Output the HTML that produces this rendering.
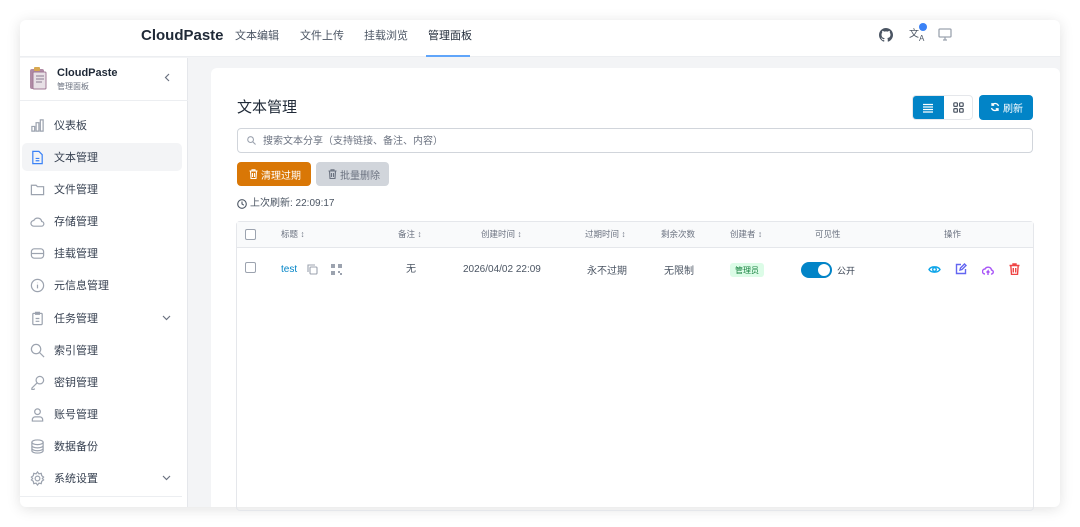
<!DOCTYPE html><html><head><meta charset="utf-8"><style>
*{box-sizing:border-box;margin:0;padding:0}
body{width:1080px;height:527px;background:#fff;font-family:"Liberation Sans","Noto Sans CJK SC",sans-serif;position:relative;overflow:hidden;color:#374151}
div{line-height:1.2}
.a{position:absolute}
.win{left:20px;top:20px;width:1040px;height:487px;background:#f3f4f6;border-radius:6px;box-shadow:0 2px 14px rgba(0,0,0,.12);overflow:hidden}
.hdr{left:0;top:0;width:1040px;height:37px;background:#fff;border-bottom:1px solid #eceef1}
.nav{font-size:11px;color:#4b5563;top:9px;line-height:14px}
.side{left:0;top:38px;width:168px;height:449px;background:#fff;border-right:1px solid #e5e7eb}
.it{left:10px;font-size:11px;color:#374151;height:16px;display:flex;align-items:center}
.it span{position:relative;top:2px}
.it svg{width:15px;height:15px;margin-right:9px;stroke:#9ca3af;fill:none;stroke-width:1.3}
.card{left:191px;top:48px;width:849px;height:460px;background:#fff;border-radius:6px}
.th{font-size:8.5px;color:#6b7280;line-height:10px}
.td{font-size:10px;color:#4b5563;top:266px;line-height:12px}
.chev{left:142px}
svg{display:block}
</style></head><body>
<div class="a win">
 <div class="a hdr">
  <div class="a" style="left:121px;top:7px;font-size:15px;font-weight:bold;color:#1f2937;line-height:18px">CloudPaste</div>
  <div class="a nav" style="left:215px">文本编辑</div>
  <div class="a nav" style="left:280px">文件上传</div>
  <div class="a nav" style="left:344px">挂载浏览</div>
  <div class="a nav" style="left:408px;color:#1f2937">管理面板</div>
  <div class="a" style="left:406px;top:35px;width:44px;height:2px;background:#60a5fa"></div>
  <svg class="a" style="left:859px;top:8px" width="14" height="14" viewBox="0 0 16 16"><path fill="#4b5563" d="M8 0C3.6 0 0 3.6 0 8c0 3.5 2.3 6.5 5.5 7.6.4.1.5-.2.5-.4v-1.4c-2.2.5-2.7-1-2.7-1-.4-.9-.9-1.2-.9-1.2-.7-.5.1-.5.1-.5.8.1 1.2.8 1.2.8.7 1.3 1.9.9 2.3.7.1-.5.3-.9.5-1.100-1.8-.2-3.6-.9-3.600-4 0-.9.3-1.6.8-2.100-.1-.2-.4-1 .1-2.100 0 0 .7-.2 2.2.8.6-.2 1.3-.3 2-.3s1.4.1 2 .3c1.5-1 2.2-.8 2.2-.8.4 1.1.2 1.9.1 2.1.5.6.8 1.3.8 2.1 0 3.1-1.9 3.7-3.6 3.9.3.3.5.8.5 1.5v2.2c0 .2.1.5.6.4C13.7 14.5 16 11.5 16 8c0-4.4-3.6-8-8-8z"/></svg>
  <div class="a" style="left:889px;top:9px;font-size:10px;color:#4b5563;line-height:12px">文<span style="font-size:8px;position:relative;top:4px">A</span></div>
  <div class="a" style="left:899px;top:3px;width:8px;height:8px;border-radius:4px;background:#3b82f6"></div>
  <svg class="a" style="left:918px;top:8px" width="14" height="13" viewBox="0 0 14 13" fill="none" stroke="#9ca3af" stroke-width="1.3"><rect x="1" y="1" width="12" height="8" rx="1"/><path d="M5 12h4M7 9v3"/></svg>
 </div>
 <div class="a side">
  <svg class="a" style="left:9px;top:9px" width="19" height="23" viewBox="0 0 19 23"><rect x="1" y="2" width="14" height="20" rx="2" fill="#b08aa5"/><rect x="4" y="5" width="13" height="17" rx="1" fill="#e8e0e6" stroke="#a07895"/><rect x="5" y="0" width="6" height="4" rx="1" fill="#d8a850"/><path d="M7 9h8M7 12h8M7 15h6" stroke="#8a7a90"/></svg>
  <div class="a" style="left:37px;top:9px;font-size:11px;font-weight:bold;color:#1f2937">CloudPaste</div>
  <div class="a" style="left:37px;top:24px;font-size:8px;color:#6b7280">管理面板</div>
  <svg class="a" style="left:144px;top:15px" width="6" height="9" viewBox="0 0 6 9" fill="none" stroke="#6b7280" stroke-width="1.2"><path d="M5 1L1.5 4.5 5 8"/></svg>
  <div class="a" style="left:0;top:42px;width:168px;height:1px;background:#eceef1"></div>
  <div class="a" style="left:2px;top:85px;width:160px;height:28px;background:#f3f4f6;border-radius:5px"></div>
  <div class="a it" style="top:59px"><svg viewBox="0 0 16 16"><path d="M2 14V9h3v5zM6.5 14V5h3v9zM11 14V2h3v12z"/></svg><span>仪表板</span></div>
  <div class="a it" style="top:91px"><svg viewBox="0 0 16 16" style="stroke:#3b82f6"><path d="M3 1.5h6.5L13 5v9.5H3z M6 9h4M6 11.5h4"/></svg><span>文本管理</span></div>
  <div class="a it" style="top:123px"><svg viewBox="0 0 16 16"><path d="M1.5 3.5h5l1.5 1.5h6.5v8.5h-13z"/></svg><span>文件管理</span></div>
  <div class="a it" style="top:155px"><svg viewBox="0 0 16 16"><path d="M4 13a3 3 0 010-6 4.5 4.5 0 018.5 1A2.5 2.5 0 0112 13z"/></svg><span>存储管理</span></div>
  <div class="a it" style="top:187px"><svg viewBox="0 0 16 16"><rect x="1.5" y="3" width="13" height="10" rx="3"/><path d="M1.5 8h13"/></svg><span>挂载管理</span></div>
  <div class="a it" style="top:219px"><svg viewBox="0 0 16 16"><circle cx="8" cy="8" r="6.5"/><path d="M8 7v4M8 5v.5"/></svg><span>元信息管理</span></div>
  <div class="a it" style="top:252px"><svg viewBox="0 0 16 16"><rect x="3" y="2.5" width="10" height="12" rx="1"/><path d="M6 1.5h4v2H6zM6 8h4M6 11h4"/></svg><span>任务管理</span></div>
  <svg class="a chev" style="top:257px" width="9" height="6" viewBox="0 0 9 6" fill="none" stroke="#6b7280" stroke-width="1.2"><path d="M1 1l3.5 3.5L8 1"/></svg>
  <div class="a it" style="top:284px"><svg viewBox="0 0 16 16"><circle cx="6.5" cy="6.5" r="5"/><path d="M10 10l5 5"/></svg><span>索引管理</span></div>
  <div class="a it" style="top:316px"><svg viewBox="0 0 16 16"><circle cx="10.5" cy="5.5" r="4"/><path d="M7.5 8.5L2 14v1.5h2l1-1"/></svg><span>密钥管理</span></div>
  <div class="a it" style="top:348px"><svg viewBox="0 0 16 16"><circle cx="8" cy="5" r="3"/><path d="M2.5 15v-1.5a3 3 0 013-3h5a3 3 0 013 3V15z"/></svg><span>账号管理</span></div>
  <div class="a it" style="top:380px"><svg viewBox="0 0 16 16"><ellipse cx="8" cy="3.5" rx="6" ry="2.5"/><path d="M2 3.5v9c0 1.4 2.7 2.5 6 2.5s6-1.1 6-2.5v-9M2 7c0 1.4 2.7 2.5 6 2.5S14 8.4 14 7M2 10c0 1.4 2.7 2.5 6 2.5s6-1.1 6-2.5"/></svg><span>数据备份</span></div>
  <div class="a it" style="top:412px"><svg viewBox="0 0 16 16"><circle cx="8" cy="8" r="2.5"/><path d="M8 1l1.5 2 2.5-.5.5 2.5 2 1.5-1.3 1.5 1.3 1.5-2 1.5-.5 2.5-2.5-.5L8 15l-1.5-2-2.5.5-.5-2.5-2-1.5L2.8 8 1.5 6.5l2-1.5.5-2.5 2.5.5z"/></svg><span>系统设置</span></div>
  <svg class="a chev" style="top:417px" width="9" height="6" viewBox="0 0 9 6" fill="none" stroke="#6b7280" stroke-width="1.2"><path d="M1 1l3.5 3.5L8 1"/></svg>
  <div class="a" style="left:0;top:438px;width:162px;height:1px;background:#eceef1"></div>
 </div>
 <div class="a card"></div>
</div>
<div class="a" style="left:237px;top:99px;font-size:15px;color:#1f2937">文本管理</div>
<div class="a" style="left:912px;top:95px;width:61px;height:25px;border:1px solid #e5e7eb;border-radius:4px;overflow:hidden">
 <div class="a" style="left:0;top:0;width:31px;height:25px;background:#0284c7"></div>
 <svg class="a" style="left:10px;top:7px" width="10" height="10" viewBox="0 0 10 10" stroke="#fff" stroke-width="1.3"><path d="M0 1.5h10M0 4h10M0 6.5h10M0 9h10"/></svg>
 <svg class="a" style="left:40px;top:6px" width="11" height="11" viewBox="0 0 11 11" fill="none" stroke="#4b5563" stroke-width="1.2"><rect x=".8" y=".8" width="3.6" height="3.6" rx="1"/><rect x="6.6" y=".8" width="3.6" height="3.6" rx="1"/><rect x=".8" y="6.6" width="3.6" height="3.6" rx="1"/><rect x="6.6" y="6.6" width="3.6" height="3.6" rx="1"/></svg>
</div>
<div class="a" style="left:979px;top:95px;width:54px;height:25px;background:#0284c7;border-radius:4px;color:#fff;font-size:10px;line-height:25px;padding:2px 0 0 24px">刷新</div>
<svg class="a" style="left:990px;top:102px" width="10" height="10" viewBox="0 0 10 10" fill="none" stroke="#fff" stroke-width="1.3"><path d="M8.5 4A3.7 3.7 0 002 3M1.5 6a3.7 3.7 0 006.5 1M2 1v2.2h2.2M8 9V6.8H5.8"/></svg>
<div class="a" style="left:237px;top:128px;width:796px;height:25px;border:1px solid #d1d5db;border-radius:4px"></div>
<svg class="a" style="left:247px;top:136px" width="9" height="9" viewBox="0 0 10 10" fill="none" stroke="#9ca3af" stroke-width="1.2"><circle cx="4" cy="4" r="3.2"/><path d="M6.5 6.5L9.5 9.5"/></svg>
<div class="a" style="left:263px;top:136px;font-size:10px;color:#6b7280">搜索文本分享（支持链接、备注、内容）</div>
<div class="a" style="left:237px;top:162px;width:74px;height:24px;background:#d97706;border-radius:4px;color:#fff;font-size:10px;line-height:24px;padding:3px 0 0 24px">清理过期</div>
<svg class="a" style="left:249px;top:169px" width="9" height="10" viewBox="0 0 9 10" fill="none" stroke="#fff" stroke-width="1.1"><path d="M.5 2h8M3 2V.8h3V2M1.5 2l.5 7.5h5L7.5 2M3.5 4v4M5.5 4v4"/></svg>
<div class="a" style="left:316px;top:162px;width:73px;height:24px;background:#d1d5db;border-radius:4px;color:#6b7280;font-size:10px;line-height:24px;padding:3px 0 0 24px">批量删除</div>
<svg class="a" style="left:328px;top:169px" width="9" height="10" viewBox="0 0 9 10" fill="none" stroke="#6b7280" stroke-width="1.1"><path d="M.5 2h8M3 2V.8h3V2M1.5 2l.5 7.5h5L7.5 2M3.5 4v4M5.5 4v4"/></svg>
<svg class="a" style="left:237px;top:199px" width="10" height="10" viewBox="0 0 10 10" fill="none" stroke="#4b5563" stroke-width="1.1"><circle cx="5" cy="5" r="4.3"/><path d="M5 2.5V5l1.8 1.2"/></svg>
<div class="a" style="left:250px;top:198px;font-size:10px;color:#4b5563">上次刷新: 22:09:17</div>
<div class="a" style="left:236px;top:221px;width:798px;height:290px;border:1px solid #e5e7eb;border-radius:4px"></div>
<div class="a" style="left:237px;top:222px;width:796px;height:26px;background:#f9fafb;border-bottom:1px solid #e5e7eb"></div>
<div class="a" style="left:245px;top:229px;width:11px;height:11px;border:1px solid #9ca3af;border-radius:2px;background:#fff"></div>
<div class="a th" style="left:281px;top:229px">标题 ↕</div>
<div class="a th" style="left:398px;top:229px">备注 ↕</div>
<div class="a th" style="left:481px;top:229px">创建时间 ↕</div>
<div class="a th" style="left:585px;top:229px">过期时间 ↕</div>
<div class="a th" style="left:661px;top:229px">剩余次数</div>
<div class="a th" style="left:730px;top:229px">创建者 ↕</div>
<div class="a th" style="left:815px;top:229px">可见性</div>
<div class="a th" style="left:944px;top:229px">操作</div>
<div class="a" style="left:245px;top:262px;width:11px;height:11px;border:1px solid #9ca3af;border-radius:2px"></div>
<div class="a td" style="left:281px;top:264px;color:#0284c7">test</div>
<svg class="a" style="left:307px;top:264px" width="11" height="11" viewBox="0 0 11 11" fill="none" stroke="#9ca3af" stroke-width="1.1"><rect x="3" y="3" width="7" height="7" rx="1"/><path d="M1 8V1h7"/></svg>
<svg class="a" style="left:331px;top:264px" width="11" height="11" viewBox="0 0 11 11" fill="#9ca3af"><rect x="0" y="0" width="4" height="4"/><rect x="7" y="0" width="4" height="4"/><rect x="0" y="7" width="4" height="4"/><rect x="7" y="7" width="2" height="2"/><rect x="9" y="9" width="2" height="2"/></svg>
<div class="a td" style="left:406px;top:264px">无</div>
<div class="a td" style="left:463px;top:264px">2026/04/02 22:09</div>
<div class="a td" style="left:587px">永不过期</div>
<div class="a td" style="left:664px">无限制</div>
<div class="a" style="left:730px;top:263px;width:34px;height:14px;background:#dcfce7;border-radius:3px;font-size:8px;color:#15803d;text-align:center;line-height:14px;padding-top:1px">管理员</div>
<div class="a" style="left:801px;top:262px;width:31px;height:16px;background:#0284c7;border-radius:8px"></div>
<div class="a" style="left:818px;top:264px;width:12px;height:12px;background:#fff;border-radius:6px"></div>
<div class="a" style="left:837px;top:266px;font-size:9px;color:#374151;line-height:11px">公开</div>
<svg class="a" style="left:928px;top:264px" width="13" height="11" viewBox="0 0 13 11" fill="none" stroke="#0ea5e9" stroke-width="1.4"><path d="M1 5.5C3 2 10 2 12 5.5 10 9 3 9 1 5.5z"/><circle cx="6.5" cy="5.5" r="1.8"/></svg>
<svg class="a" style="left:955px;top:263px" width="12" height="12" viewBox="0 0 12 12" fill="none" stroke="#6366f1" stroke-width="1.4"><path d="M6 1.5H1.5v9h9V6M5 7l.5-2 4-4 1.5 1.5-4 4z"/></svg>
<svg class="a" style="left:982px;top:264px" width="12" height="12" viewBox="0 0 12 12" fill="none" stroke="#a855f7" stroke-width="1.4"><path d="M3 10a2.5 2.5 0 010-5 3.5 3.5 0 016.5 1 2 2 0 01-.5 4M6 11V7l-1.5 1.5M6 7l1.5 1.5"/></svg>
<svg class="a" style="left:1009px;top:263px" width="11" height="12" viewBox="0 0 11 12" fill="none" stroke="#ef4444" stroke-width="1.4"><path d="M.5 2.5h10M4 2.5V1h3v1.5M1.8 2.5l.7 9h6l.7-9M4.3 5v4.5M6.7 5v4.5"/></svg>
</body></html>
